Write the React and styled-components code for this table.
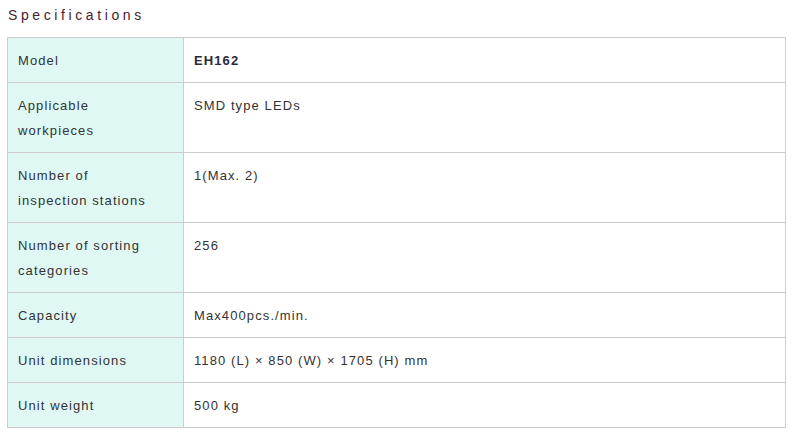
import React from 'react'
import styled, { createGlobalStyle } from 'styled-components'

const specs = [
  { label: ['Model'], value: 'EH162', strong: true },
  { label: ['Applicable', 'workpieces'], value: 'SMD type LEDs' },
  { label: ['Number of', 'inspection stations'], value: '1(Max. 2)' },
  { label: ['Number of sorting', 'categories'], value: '256' },
  { label: ['Capacity'], value: 'Max400pcs./min.' },
  { label: ['Unit dimensions'], value: '1180 (L) × 850 (W) × 1705 (H) mm' },
  { label: ['Unit weight'], value: '500 kg' },
]

const App = () => {
  return (
    <Page>
      <GlobalStyle />
      <Title>Specifications</Title>
      <SpecTable>
        <tbody>
          {specs.map((row) => (
            <tr key={row.label.join(' ')}>
              <LabelCell>
                {row.label.map((line, i) => (
                  <React.Fragment key={line}>
                    {i > 0 && <br />}
                    {line}
                  </React.Fragment>
                ))}
              </LabelCell>
              <ValueCell $strong={row.strong}>{row.value}</ValueCell>
            </tr>
          ))}
        </tbody>
      </SpecTable>
    </Page>
  )
}

export default App

const GlobalStyle = createGlobalStyle`
  body {
    margin: 0;
    background: #fff;
    font-family: "Liberation Sans", Arial, sans-serif;
  }
`

const Page = styled.div`
  padding: 5px 8px 0 7px;
`

const Title = styled.h3`
  margin: 0 0 0 1px;
  height: 32px;
  font-size: 14px;
  font-weight: normal;
  letter-spacing: 3.6px;
  line-height: 20px;
  color: #4a1c30;
`

const SpecTable = styled.table`
  width: 779px;
  border-collapse: collapse;
  font-size: 13px;
  color: #333;

  td {
    border: 1px solid #cccccc;
    padding: 10px 10px 9px 10px;
    line-height: 25px;
    vertical-align: top;
    letter-spacing: 1.1px;
  }
`

const LabelCell = styled.td`
  width: 155px;
  background: #dff8f4;
`

const ValueCell = styled.td`
  font-weight: ${(p) => (p.$strong ? 'bold' : 'normal')};
  color: ${(p) => (p.$strong ? '#2a2a3a' : '#333')};
`
